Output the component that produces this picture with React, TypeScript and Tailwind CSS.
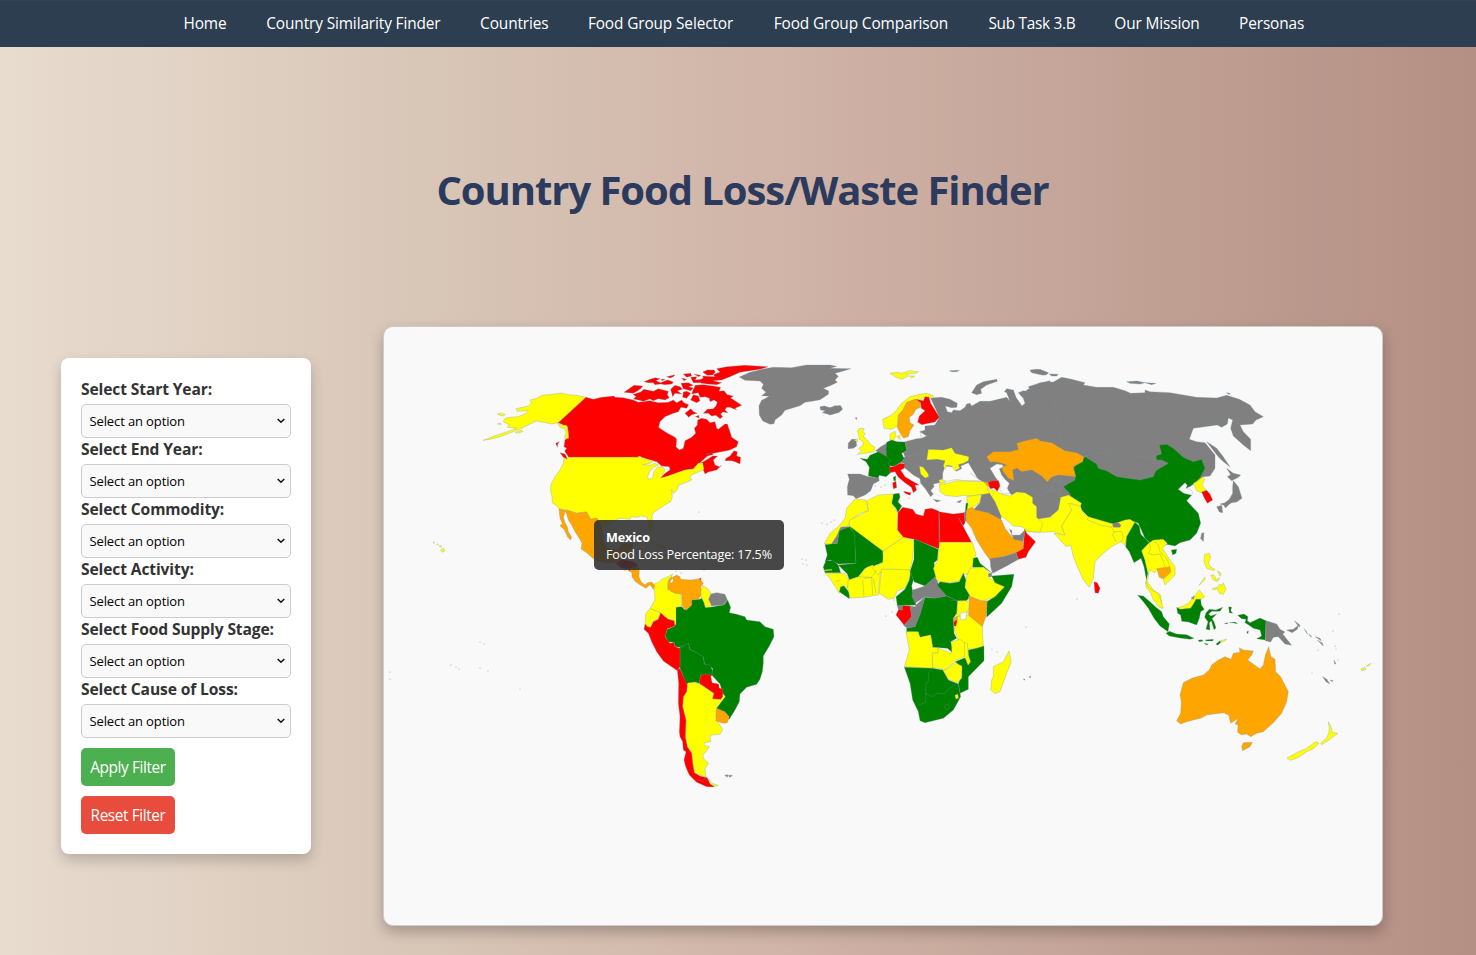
import React from "react";

type Shape = [string, string];

const Y = "#ffff00";
const R = "#ff0000";
const O = "#ffa500";
const G = "#008000";
const N = "#808080";
const W = "#f9f9f9";

const northAmerica: Shape[] = [
  [Y, "190,271 220,266 255,255 285,243 305,235 330,222 350,213 375,218 395,222 415,218 498,142 470,136 445,134 425,129 395,133 365,136 350,145 330,150 334,160 325,168 288,176 292,184 325,182 318,190 295,200 270,202 255,205 250,215 268,225 262,232 290,234 262,245 220,259"],
  [Y, "232,192 245,190 256,194 245,198"], [Y, "232,222 242,219 243,224"], [Y, "286,247 305,240 308,245 292,250"],
  [R, "498,142 520,148 545,142 582,138 585,142 610,143 640,150 655,157 690,152 715,158 745,157 760,150 770,158 785,150 792,158 806,164 800,175 783,172 775,185 760,190 735,200 720,215 716,232 724,238 740,248 765,262 770,268 768,290 778,300 790,295 795,272 815,262 827,250 823,235 832,225 833,210 845,205 860,208 870,218 885,215 890,235 895,238 915,222 922,222 930,245 935,262 955,275 950,290 930,300 905,305 880,310 860,320 838,340 850,335 878,318 893,318 880,330 885,345 898,350 905,346 890,360 865,366 855,372 850,360 848,340 835,340 820,356 795,360 770,370 745,378 720,386 735,370 750,360 748,350 725,348 710,335 690,330 655,318 655,322 446,322 434,303 440,295 432,290 435,270 445,262 443,230 415,218"],
  [Y, "412,218 425,226 440,226 445,245 446,265 434,267 438,246 436,238 420,232"],
  [R, "918,325 930,318 942,302 952,305 950,318 962,322 960,342 945,335 935,332 915,332"],
  [R, "420,308 435,312 443,328 430,322"], [R, "407,280 418,275 413,283 412,292"],
  [R, "612,127 625,118 642,106 668,108 662,116 650,124 640,130 625,128"],
  [R, "640,147 648,140 640,133 662,126 672,118 700,124 715,116 745,124 742,135 748,143 735,150 715,146 700,152 690,147 670,154 655,150"],
  [R, "672,95 690,88 706,83 720,86 708,92 722,98 742,90 750,92 760,96 756,102 735,104 722,102 705,104 700,98 685,98"],
  [R, "740,80 765,74 760,80 750,84"], [R, "722,88 735,88 728,92"],
  [R, "790,72 812,70 815,78 800,82"], [R, "785,84 800,88 792,92"],
  [R, "812,82 830,80 826,90 845,88 842,98 820,98"], [R, "822,72 842,76 836,80"],
  [R, "752,118 765,106 780,110 788,118 772,122 785,132 765,130 758,140"],
  [R, "783,100 805,98 820,106 806,110 820,114 812,122 790,116"], [R, "790,126 800,124 812,130 800,145 788,142"],
  [R, "848,66 862,60 882,60 886,66 878,75 862,76"], [R, "836,92 850,84 848,78 885,80 880,74 900,66 890,56 920,50 975,46 1044,50 1020,58 960,67 930,80 905,90 880,92 905,98 890,104 862,102 845,100"],
  [R, "826,106 850,104 880,108 902,112 897,124 912,122 922,134 940,138 932,144 945,152 965,166 945,175 950,180 930,172 920,172 915,180 924,188 908,186 902,192 908,200 900,206 888,196 875,198 865,190 850,190 862,178 880,176 888,168 892,156 882,150 870,155 868,145 856,140 840,142 835,128 815,132 820,118"],
  [R, "820,134 835,138 840,152 830,158 812,150"], [R, "795,190 812,176 822,186 832,190 815,194 806,202"], [R, "826,200 836,196 838,204"],
  [R, "858,312 875,310 880,314 865,316"],
  [Y, "446,322 655,322 660,318 668,326 692,330 700,332 690,340 668,344 690,346 705,340 715,345 700,352 688,366 683,380 685,388 697,385 702,365 712,352 728,350 735,360 726,378 722,384 745,378 770,368 795,360 820,358 835,340 848,338 852,358 835,366 820,372 810,380 815,390 792,400 776,405 772,420 760,430 755,418 757,440 752,455 730,468 715,478 700,488 696,500 698,520 700,540 692,545 685,525 682,502 665,498 650,502 635,500 630,508 600,505 575,515 560,530 545,525 535,508 512,508 500,486 480,488 470,490 440,480 417,477 413,470 397,458 396,440 392,425 392,405 405,380 420,360 430,340 432,325 440,328"],
  [O, "435,483 440,480 470,490 480,488 500,486 512,508 530,504 545,530 550,570 560,595 595,600 605,582 640,580 635,600 620,612 590,635 570,640 545,635 520,626 500,608 483,597 486,580 478,565 465,545 455,525 445,510 440,492"],
  [O, "417,477 435,481 434,492 430,500 435,518 442,530 445,545 455,562 452,570 443,562 438,550 432,538 420,528 427,520 420,505"],
  [R, "588,640 605,628 640,635 655,645 640,655 620,658 600,652"],
  [O, "628,662 640,650 658,655 657,680 663,695 675,705 682,698 695,696 706,708 700,718 690,704 678,715 662,706 645,694 636,680 636,670"],
  [R, "623,656 631,659 628,664"], [Y, "608,656 620,659 614,662"],
  [Y, "690,570 710,580 740,595 720,592"],
  [Y, "62,600 70,595 75,602 67,607"], [Y, "39,576 43,576 42,580"], [Y, "50,582 54,582 53,585"], [Y, "57,587 65,588 62,592"],
];

const southAmerica: Shape[] = [
  [G, "228,172 245,170 255,180 270,165 275,150 300,148 310,140 315,172 330,172 355,167 372,165 383,150 392,172 388,188 410,193 435,200 440,210 480,215 495,230 520,238 522,260 508,288 490,318 490,340 487,365 480,388 470,403 440,412 420,432 418,455 405,480 388,508 350,475 375,440 368,430 360,402 335,375 338,355 313,342 310,322 270,298 265,282 240,292 225,290 222,278 205,275 195,258 202,238 225,228"],
  [G, "240,292 265,280 270,298 285,305 310,320 313,342 330,345 338,362 335,378 303,375 298,400 283,396 265,402 258,405 248,375 240,355"],
  [Y, "185,88 200,82 218,72 214,80 205,92 203,112 215,125 243,132 245,168 228,172 228,225 222,222 222,210 205,208 180,188 150,176 165,150 163,115 165,100 175,98"],
  [O, "205,92 214,80 218,84 210,95 214,100 220,92 218,82 230,75 240,80 242,88 270,90 300,86 310,100 302,112 307,130 295,148 275,150 276,165 260,180 248,172 245,132 225,130 203,118"],
  [R, "298,86 304,84 302,91"],
  [Y, "150,176 180,188 175,205 155,218 152,232 142,230 135,220 137,190"],
  [R, "135,222 142,230 152,232 160,215 175,208 182,188 192,198 205,208 222,212 225,228 202,236 195,260 210,280 222,278 225,290 240,295 240,350 232,362 190,333 170,305 155,275 145,250 132,238"],
  [Y, "308,107 322,115 333,130 326,148 336,168 318,173 312,158 305,145 302,125"],
  [N, "333,132 350,128 375,133 382,150 370,165 335,167 326,148"],
  [Y, "258,405 265,398 285,397 300,402 320,415 342,430 338,446 362,448 370,432 376,440 350,472 348,500 355,518 368,538 360,553 330,556 332,575 314,578 312,586 328,590 318,605 308,615 312,628 326,640 315,655 318,682 300,675 283,668 278,640 275,610 262,590 256,560 258,510 248,470 250,440 260,425"],
  [R, "298,400 302,376 318,372 332,375 336,398 356,402 358,414 369,418 368,440 362,448 338,446 342,430 320,415"],
  [R, "232,360 240,355 248,375 262,405 260,425 250,440 248,470 258,510 256,560 262,590 275,610 278,640 283,668 300,678 322,683 330,700 343,711 320,710 290,697 268,675 257,650 252,630 258,605 250,600 248,575 240,560 238,545 240,500 235,460 236,400"],
  [Y, "326,688 335,700 355,706 345,709 330,702"],
  [O, "350,475 375,485 388,500 382,518 370,520 348,513 348,495"],
  [N, "374,676 384,674 382,682"], [N, "386,675 398,677 388,682"],
];

const eurasiaWest: Shape[] = [
  [N, "362,114 395,112 420,118 442,130 440,142 425,143 406,138 412,155 425,158 430,150 450,152 465,142 470,132 480,130 485,138 510,124 540,124 565,118 590,112 600,124 590,98 583,95 590,86 610,90 618,112 636,138 645,130 640,115 625,98 640,92 655,94 660,88 655,80 680,72 720,62 760,280 750,380 748,425 720,470 680,478 640,430 600,400 575,370 545,385 525,370 480,340 430,340 400,352 388,368 370,372 372,380 362,392 370,402 362,410 345,385 332,370 330,356 310,345 292,330 282,322 282,310 262,305 285,290 280,278 290,272 285,245 320,236 335,235 350,228 330,215 345,210 345,198 375,195 388,172"],
  [W, "398,340 405,318 428,320 438,334 455,326 452,318 475,308 500,350 508,362 460,362 440,358 410,364 398,360"],
  [W, "540,325 560,312 578,314 580,322 568,326 575,345 585,358 598,370 592,385 600,400 578,402 570,390 568,368 555,350"],
  [N, "485,98 500,75 520,65 560,58 562,64 530,75 512,88 515,100 500,104"],
  [N, "660,32 690,28 715,38 708,45 680,38"], [N, "418,32 448,31 440,35 425,35"],
  [N, "197,272 212,260 230,250 234,260 230,275 235,292 220,285"],
  [Y, "218,178 245,165 260,150 275,130 300,110 330,103 350,100 370,107 368,115 345,110 335,118 315,118 290,130 280,150 265,165 262,198 245,208 222,205"],
  [O, "315,118 330,125 332,142 318,148 308,165 298,172 300,188 312,195 300,212 295,230 280,234 272,222 262,203 266,165 280,148 290,127"],
  [R, "318,118 340,122 345,110 357,112 362,130 375,150 388,172 375,186 335,194 323,186 328,168 345,152 334,145 332,128"],
  [Y, "240,40 262,37 275,40 300,32 325,35 318,40 290,42 295,48 275,58 258,52"], [Y, "298,48 315,48 305,54"],
  [N, "30,140 45,138 50,144 70,143 90,137 97,148 88,157 65,163 38,158 48,152 32,150"],
  [Y, "142,212 150,205 163,206 158,216 165,220 160,230 172,240 180,252 195,262 192,275 165,280 143,283 155,272 146,266 158,256 160,246 148,238 146,225"],
  [N, "115,250 125,238 138,238 140,258 130,265 114,266"], [Y, "132,240 142,236 142,246"],
  [Y, "240,222 255,214 258,228 250,242 240,240"], [Y, "260,230 270,226 270,238"],
  [G, "150,295 172,298 180,286 205,275 222,285 242,295 245,305 240,320 240,340 228,350 208,346 204,355 175,348 178,322 168,305"],
  [G, "230,247 245,240 262,245 285,246 290,272 275,280 282,295 275,305 255,318 238,318 235,310 242,300 230,290 228,268"],
  [N, "113,342 150,342 175,350 206,354 208,362 190,372 182,392 165,405 138,416 130,407 113,405 112,380 118,358"],
  [R, "238,322 255,318 270,310 284,312 283,325 272,330 285,350 305,362 327,375 315,376 320,390 310,398 304,382 285,368 265,352 255,335 240,338"],
  [R, "281,394 303,398 300,406 285,400"], [R, "248,368 258,364 260,383 250,386"], [G, "250,352 257,348 257,362 251,362"],
  [N, "370,418 392,422 380,426"], [N, "440,426 455,420 450,428"],
  [Y, "355,268 400,270 425,263 435,280 477,290 475,302 460,310 445,314 450,325 435,332 425,318 410,316 405,328 400,318 405,302 380,298 350,300"],
  [Y, "328,318 340,322 355,342 356,350 345,354 332,342"],
  [O, "530,290 550,275 600,275 625,268 620,250 645,242 680,235 690,242 725,248 765,272 800,278 822,290 818,305 790,320 797,350 745,345 725,352 712,366 695,348 665,330 635,335 622,325 608,330 612,362 595,355 580,335 575,322 590,315 575,310 555,305 540,306"],
  [Y, "388,372 405,372 440,362 480,364 525,365 535,385 540,402 510,404 480,408 462,406 440,410 405,406 390,395"], [Y, "386,360 398,358 408,368 390,370"],
  [O, "522,366 535,366 545,382 532,378"], [R, "534,366 550,362 565,362 570,378 562,394 552,384 540,386"],
  [Y, "470,410 515,404 508,428 485,445 470,450 472,430"], [G, "468,430 474,430 470,455 466,455"],
  [N, "515,404 540,400 555,420 575,460 572,482 545,476 490,450 510,428"],
  [Y, "530,386 545,390 560,394 575,402 600,408 620,396 645,398 668,412 668,430 680,440 680,472 698,490 690,517 655,514 635,500 610,498 590,480 573,468 555,425"],
];

const africa: Shape[] = [
  [O, "467,92 485,82 498,90 535,98 575,120 585,145 605,170 640,185 640,208 615,218 580,230 540,240 522,215 500,180 485,145 468,122"],
  [R, "644,148 650,160 677,185 655,215 648,232 625,238 618,218 640,206"],
  [N, "598,148 606,152 604,166 630,165 645,150 640,184 612,178"],
  [N, "540,236 580,230 618,218 625,238 590,258 548,280 542,262"],
  [N, "462,98 468,90 468,122 464,126"],
  [R, "387,95 430,102 462,98 465,128 460,138 445,112 468,155 485,187 390,187"],
  [R, "264,98 278,82 308,88 318,102 340,108 345,88 365,85 387,94 390,208 312,178 280,172 262,150"],
  [G, "250,42 268,40 270,52 264,65 275,78 264,98 258,85 245,70"],
  [Y, "170,62 205,45 250,42 245,70 262,98 262,150 280,172 218,214 118,140 115,122 175,92"],
  [Y, "135,57 168,60 175,92 150,100 118,122 115,138 92,142 82,165 65,192 43,192 60,160 90,135 105,115 110,85"],
  [N, "65,192 82,165 92,142 115,140 114,150 88,152 82,188"],
  [G, "45,194 82,190 88,152 118,140 135,160 138,250 85,252 60,240 45,245 52,225"],
  [G, "118,138 218,213 220,246 185,260 165,265 145,290 118,300 112,282 85,255 138,250 133,160"],
  [G, "42,255 48,242 70,242 85,255 92,278 45,278 40,262"], [Y, "42,270 66,268 66,271 43,273"],
  [Y, "45,280 105,280 115,298 113,325 100,318 88,340 72,315 60,295"],
  [G, "92,320 102,318 120,340 118,356 88,335"],
  [Y, "113,325 115,300 145,290 170,262 188,255 200,268 212,270 205,345 160,352 120,354"],
  [Y, "185,262 218,248 220,213 280,172 312,182 308,235 300,270 280,272 255,268 218,268 205,285"],
  [Y, "215,268 255,268 300,270 304,280 285,325 262,332 252,355 235,358 207,340"],
  [G, "312,176 385,208 382,240 372,248 378,290 345,318 312,305 300,275 312,238"],
  [G, "302,275 310,300 305,318 310,345 318,375 262,377 258,350 285,328 298,300"],
  [N, "308,330 345,318 375,290 390,318 412,348 375,355 345,350 315,370 306,350"],
  [Y, "388,187 487,187 498,222 488,255 470,285 458,280 450,302 420,308 390,305 380,300 370,265 384,240"],
  [G, "390,305 420,310 448,305 460,280 468,300 465,322 480,348 470,362 440,362 410,348 382,316"],
  [G, "490,235 502,232 510,250 545,278 520,262 488,262"],
  [Y, "480,265 520,262 540,280 535,290 548,300 584,322 555,352 515,363 482,350 465,322 470,290"],
  [G, "545,288 612,283 605,320 575,370 530,412 530,365 555,350 584,320 555,308"], [N, "535,282 545,278 545,290 536,290"],
  [O, "475,348 515,363 532,362 528,408 517,440 475,408 478,370"],
  [Y, "443,363 472,362 478,375 472,400 440,410"], [Y, "440,410 475,405 517,440 520,502 475,508 465,490 445,480 433,450"],
  [W, "450,400 470,395 468,418 452,420"],
  [G, "345,352 375,355 410,348 442,362 440,400 430,415 432,460 440,475 422,485 430,520 412,505 368,502 362,465 330,472 322,455 290,455 290,443 315,440 325,410"],
  [O, "430,412 442,410 442,420 432,424"], [R, "431,425 442,420 438,438 432,438"],
  [N, "318,375 345,350 332,400 315,440 290,443 280,435 305,410 300,378 315,380"], [N, "262,377 280,378 280,390 265,388"],
  [R, "278,377 300,378 305,410 282,435 258,405 266,388 278,390"],
  [Y, "288,455 325,455 330,472 362,465 368,502 385,503 384,518 367,520 368,565 283,560 298,510"],
  [Y, "367,520 384,518 385,505 425,520 425,485 450,478 465,490 463,530 440,540 405,570 368,562"],
  [G, "475,510 500,505 522,498 522,542 475,590 475,628 450,640 445,610 455,590 455,562 436,545 465,533 475,530"],
  [Y, "463,488 472,490 475,525 482,545 474,556 468,540 463,530"],
  [Y, "398,570 408,570 435,548 456,558 455,595 440,608 415,598"],
  [G, "283,562 368,565 398,570 415,600 445,612 452,650 430,690 400,715 345,728 330,722 325,695 308,660 300,610"],
  [Y, "435,646 443,642 446,655 437,657"],
  [Y, "545,600 550,590 550,560 580,545 597,513 604,545 592,575 570,635 555,641 542,630"],
  [N, "640,597 645,597 643,601"], [N, "657,591 662,588 661,594"],
];

const asia: Shape[] = [
  [N, "-10,90 15,78 30,68 70,66 95,52 125,58 165,68 160,75 200,82 250,82 285,92 302,100 345,98 345,90 360,95 420,98 500,112 560,114 590,106 628,118 660,135 675,155 700,170 678,180 668,192 630,195 640,215 662,238 662,272 640,255 610,228 602,205 608,180 595,174 592,192 575,202 562,195 490,205 478,238 500,245 525,248 555,285 555,325 540,348 520,350 480,380 330,420 100,420 85,450 60,472 15,475 -20,400"],
  [N, "0,30 20,28 55,40 40,46 5,38"], [N, "58,42 85,43 80,48 65,48"], [N, "290,65 320,63 345,68 330,72 300,70"], [N, "345,68 378,70 365,74"], [N, "590,98 600,100 598,104"],
  [G, "165,290 200,312 205,325 230,332 260,350 330,360 370,350 378,332 415,310 395,300 380,300 378,287 395,282 388,255 410,253 430,265 460,292 490,305 515,298 525,325 512,350 490,372 468,385 465,368 445,388 462,400 485,405 470,422 505,460 512,490 500,520 480,540 450,548 435,558 405,552 395,538 360,548 345,535 325,490 300,480 270,490 250,492 215,487 175,470 155,450 150,430 125,410 115,395 100,380 135,360 137,348 130,325 145,310"],
  [W, "465,368 472,376 468,385 484,390 488,398 485,405 462,400 445,388"],
  [G, "424,570 440,568 438,580 428,585"], [N, "515,520 522,518 520,545 512,535"],
  [Y, "490,370 500,365 518,350 524,358 516,375 528,390 512,398 500,392"],
  [R, "515,396 530,391 540,402 548,420 532,430 522,412"],
  [N, "590,325 610,340 632,345 625,352 605,362 592,350 602,344"],
  [N, "610,362 625,380 636,415 620,426 605,428 590,438 582,436 570,432 585,428 598,418 608,400 608,380"],
  [N, "560,440 575,436 578,458 568,456"], [N, "582,436 596,434 586,444"],
  [N, "530,245 560,265 578,288 600,320 580,305 565,290"],
  [Y, "-20,478 18,475 60,472 85,450 92,412 115,405 155,430 150,440 125,430 125,450 95,498 105,528 85,520 70,515 35,517 -15,515"],
  [Y, "150,438 160,460 175,470 250,492 285,480 300,478 315,488 300,510 290,530 285,555 272,545 245,560 220,580 195,605 190,655 178,682 160,660 140,615 130,590 122,555 108,560 95,545 72,520 105,525 95,498 125,450 115,430"],
  [R, "192,665 202,668 210,685 205,700 195,698"],
  [N, "248,490 265,488 273,496 270,502 250,502"],
  [G, "315,487 328,498 332,522 358,548 335,572 345,600 354,640 350,662 342,620 333,595 312,608 298,575 287,560 290,530"],
  [Y, "335,572 358,548 370,540 400,538 412,550 398,565 420,600 435,620 435,645 405,675 400,660 418,640 380,628 375,638 358,630 352,665 370,690 392,705 395,730 370,710 347,668 354,640 345,600"],
  [O, "380,626 420,620 422,636 400,657 388,652"],
];

const oceania: Shape[] = [
  [Y, "198,245 205,262 218,272 235,280 242,300 250,325 238,322 220,300 212,278 198,262"],
  [G, "173,286 190,288 210,305 228,322 245,335 250,350 268,372 264,395 240,378 222,355 205,325 190,305"],
  [G, "258,400 268,394 290,402 320,404 342,415 330,418 300,414 268,408"],
  [G, "354,421 365,419 370,423 358,425"], [G, "375,420 400,418 398,423 380,423"], [G, "372,430 385,432 380,435"], [G, "408,432 420,422 422,428 412,436"], [Y, "422,422 440,417 434,423 423,427"],
  [Y, "295,322 305,320 325,310 340,292 358,270 375,290 362,298 348,298 340,312 330,325 300,330"],
  [G, "290,322 300,328 332,325 342,310 348,298 362,298 364,315 373,328 362,335 358,355 350,375 325,366 305,364 302,345 293,340"], [N, "333,294 344,288 340,298"],
  [G, "378,338 388,328 408,330 428,322 420,334 395,334 386,342 392,348 410,342 396,356 402,365 408,384 402,389 394,362 388,368 390,390 378,388 384,365 374,352"],
  [G, "446,320 455,322 452,332 458,340 448,338"], [G, "433,370 443,368 442,372"], [G, "448,368 465,366 473,371 460,369"],
  [G, "473,346 492,342 504,350 502,362 510,368 540,354 558,362 556,420 530,416 545,408 540,390 520,385 505,374 495,368 498,358 485,356"], [G, "500,396 505,392 504,402"],
  [N, "558,362 590,372 600,388 615,396 608,402 635,436 615,432 595,410 580,412 572,426 556,422"],
  [N, "620,390 640,388 655,376 652,388 636,398"], [N, "643,362 660,375 658,382"],
  [N, "672,386 680,395 682,402"], [N, "686,402 696,410 692,410"], [N, "705,410 720,415 724,422"], [N, "712,420 728,430 730,438"], [N, "762,480 768,492 764,492"], [N, "728,530 740,538 750,552 738,545"], [N, "750,540 760,542 756,545"],
  [Y, "843,507 855,502 858,508 846,512"], [Y, "859,498 873,490 868,497"],
  [Y, "374,163 388,160 392,172 386,188 390,200 405,208 402,212 380,205 372,185"],
  [Y, "357,256 374,232 376,238 364,250"], [Y, "392,225 402,225 410,240 420,232 412,245 400,240"], [Y, "412,212 424,220 420,228"],
  [Y, "397,266 415,260 418,252 425,256 430,248 438,268 430,283 418,280 412,266 400,270"],
  [O, "478,443 490,450 520,453 515,465 503,480 540,507 550,495 556,465 566,440 573,470 585,478 587,515 602,530 612,550 625,575 620,605 605,640 580,668 550,695 530,700 512,710 500,702 485,705 473,697 474,675 465,672 475,655 452,670 446,645 430,638 380,645 362,655 340,660 320,665 302,672 290,662 302,640 304,605 300,585 310,548 335,535 370,525 388,510 395,495 415,480 435,470 453,478 460,460 480,457"],
  [O, "490,728 517,727 510,740 488,752 485,740"],
  [Y, "745,665 753,680 757,697 773,700 750,718 725,734 722,730 740,714 746,700 748,685"],
  [Y, "708,724 717,730 700,746 680,755 650,775 632,781 621,774 650,758 680,745"],
];

const greenland: Shape[] = [
  [N, "58,66 90,52 130,42 160,37 215,38 260,30 330,30 350,34 330,40 392,41 370,48 345,55 355,64 345,75 352,82 330,92 310,100 326,108 325,118 300,134 280,138 255,142 240,152 215,160 195,166 185,180 165,195 162,206 150,208 140,203 128,198 118,180 117,152 125,136 148,124 125,122 138,112 125,100 130,88 120,78 75,76"],
  [N, "300,158 315,154 330,158 345,152 362,152 367,162 355,172 330,180 308,172 318,166"],
  [N, "406,188 411,188 409,194"],
];

const groups: { at: string; shapes: Shape[] }[] = [
  { at: "translate(720 355) scale(.33333)", shapes: greenland },
  { at: "translate(420 350) scale(.33333)", shapes: northAmerica },
  { at: "translate(600 550) scale(.33333)", shapes: southAmerica },
  { at: "translate(1030 360) scale(.33333)", shapes: asia },
  { at: "translate(810 360) scale(.33333)", shapes: eurasiaWest },
  { at: "translate(810 480) scale(.33333)", shapes: africa },
  { at: "translate(1080 500) scale(.33333)", shapes: oceania },
];

const borders: { at: string; d: string }[] = [
  { at: "translate(1030 360) scale(.33333)", d: "M165,290 L190,278 230,282 240,266 270,275 300,288 350,292 380,287 M175,470 L172,480 210,495 245,502 250,492 M245,502 L252,515 248,525 258,545 M252,515 L275,515 280,530 275,545 M358,548 L362,565 355,580 370,585 390,582 398,600 405,620 M370,542 L385,555 390,575 410,595 420,620 M0,360 L30,385 60,395 80,350 M60,395 L90,385 100,380 M20,400 L50,398 70,390 90,405 M58,375 L80,362 110,365" },
  { at: "translate(810 360) scale(.33333)", d: "M335,235 L330,215 M350,228 L375,218 400,235 420,262 M350,240 L360,270 M345,210 L375,215 M285,290 L310,285 340,300 M290,272 L320,285 350,280 M310,320 L330,318 350,300 M355,342 L380,335 400,335 M332,370 L350,355 385,360 M285,300 L310,320 M130,350 L125,400 M480,340 L525,368 M612,362 L650,375 700,415 720,415" },
  { at: "translate(810 480) scale(.33333)", d: "M92,300 L75,305 M160,295 L185,292 188,345 M158,300 L162,350 M190,295 L198,340 M145,290 L185,292 200,270 M368,565 L357,575 355,605 348,610 347,668 325,675 M348,640 L365,650 380,640 400,642 440,608 M403,680 L412,672 420,680 410,690 403,680 M385,95 L387,187 M420,362 L445,362 M368,502 L385,503" },
  { at: "translate(600 550) scale(.33333)", d: "M358,132 L360,165 M285,685 L310,695 315,683 M315,683 L325,695" },
];

const dots = [
  "699,512", "480,642", "484,644", "451,665", "456,667", "459,669", "480,668", "488,671", "390,672", "390,679", "520,689",
  "802,559", "806,560", "803,564", "807,565", "822,523", "827,524", "831,522", "834,520", "875,486", "881,487", "885,485",
  "892,612", "886,616", "894,600", "1026,627", "992,649", "997,652", "1077,599", "909,498", "676,571", "681,573", "700,568", "702,562", "704,570",
  "1333,631", "1336,649", "1338,660", "1312,673", "1335,646", "1339,614", "1318,650",
];

function WorldMap() {
  return (
    <svg className="block size-full" viewBox="384 327 998 598">
      {groups.map((g, i) => (
        <g key={i} transform={g.at} stroke="#78909c" strokeWidth={0.9} strokeLinejoin="round">
          {g.shapes.map(([fill, points], j) => (
            <polygon key={j} points={points} fill={fill} />
          ))}
        </g>
      ))}
      {borders.map((b, i) => (
        <path key={i} d={b.d} transform={b.at} fill="none" stroke="#78909c" strokeWidth={1} />
      ))}
      {dots.map((p) => {
        const [x, y] = p.split(",").map(Number);
        return <circle key={p} cx={x} cy={y} r={0.6} fill="#808080" opacity={0.7} />;
      })}
    </svg>
  );
}

const links: [string, string][] = [
  ["Home", "w-[43px]"],
  ["Country Similarity Finder", "w-[174px]"],
  ["Countries", "w-[68px]"],
  ["Food Group Selector", "w-[146px]"],
  ["Food Group Comparison", "w-[175px]"],
  ["Sub Task 3.B", "w-[86px] tracking-[-0.3px]"],
  ["Our Mission", "w-[85px]"],
  ["Personas", "w-[63px]"],
];

const filters = ["Start Year", "End Year", "Commodity", "Activity", "Food Supply Stage", "Cause of Loss"];

export default function App() {
  return (
    <div className="h-[955px] w-[1476px] overflow-hidden bg-[linear-gradient(to_right,#e8dccf,#d8c6b7_29%,#d0b4a7_53%,#b48f84)] font-['Open_Sans','Noto_Sans',sans-serif]">
      <nav className="flex h-[47px] gap-[39.8px] border-t border-[#3a3f50] bg-[#2c3e50] pl-[183.5px] text-[15.4px] leading-[45px] tracking-[-0.12px] text-white">
        {links.map(([label, width]) => (
          <a key={label} className={`${width} shrink-0 whitespace-nowrap`}>{label}</a>
        ))}
      </nav>
      <h1 className="mt-[113px] pl-[9px] text-center text-[40px] leading-[59px] font-bold tracking-[-1.06px] text-[#2c3a5e]">Country Food Loss/Waste Finder</h1>
      <main className="mt-[107px] flex items-start pl-[61px]">
        <aside className="mt-8 h-[496px] w-[250px] rounded-lg bg-white p-5 shadow-[0_6px_14px_rgba(0,0,0,0.2)]">
          {filters.map((name) => (
            <div key={name} className="h-[60px]">
              <label className="block h-[26px] text-[15.6px] leading-[22px] font-bold tracking-[-0.12px] whitespace-nowrap text-[#333]">Select {name}:</label>
              <div className="flex h-[34px] items-center justify-between rounded-[5px] border border-[#ccc] bg-[#f9f9f9] pr-[5px] pl-[7.5px] text-[13px] tracking-[-0.12px] text-black">
                <span className="pt-[2px]">Select an option</span>
                <svg width="8" height="6" viewBox="0 0 8 6" fill="none" stroke="#111" strokeWidth="1.5"><path d="M.7 1 4 4.3 7.3 1" /></svg>
              </div>
            </div>
          ))}
          <button className="mt-[10px] block h-[38px] w-[94px] rounded-[5px] bg-[#4caf50] pt-[2px] text-[15.4px] tracking-[-0.4px] whitespace-nowrap text-white">Apply Filter</button>
          <button className="mt-[10px] block h-[38px] w-[94px] rounded-[5px] bg-[#e74c3c] pt-[2px] text-[15.4px] tracking-[-0.4px] whitespace-nowrap text-white">Reset Filter</button>
        </aside>
        <section className="relative ml-[72px] h-[600px] w-[1000px] shrink-0 rounded-[10px] border border-[#ccc] bg-[#f9f9f9] shadow-[0_6px_14px_rgba(0,0,0,0.25)]">
          <WorldMap />
          <div className="absolute top-[193px] left-[210px] h-[50px] w-[190px] rounded-[5px] bg-[#333333]/90 px-3 pt-[9px] text-[12.6px] leading-[17px] tracking-[-0.15px] whitespace-nowrap text-white">
            <div className="font-bold">Mexico</div>
            <div>Food Loss Percentage: 17.5%</div>
          </div>
        </section>
      </main>
    </div>
  );
}
